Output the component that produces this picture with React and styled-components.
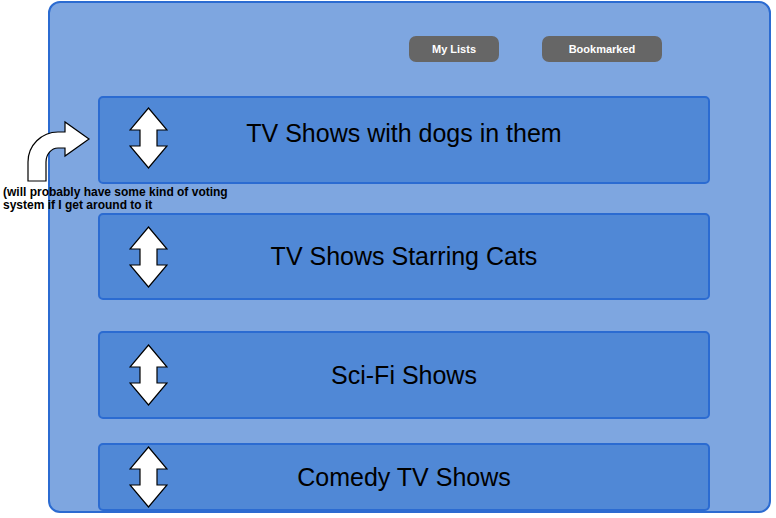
import React from "react";
import styled, { createGlobalStyle } from "styled-components";

const Global = createGlobalStyle`
  html, body { margin: 0; padding: 0; background: #ffffff; overflow: hidden; }
  body { font-family: "Liberation Sans", Arial, sans-serif; }
`;

const Page = styled.div`
  position: relative;
  width: 776px;
  height: 518px;
`;

const Frame = styled.div`
  box-sizing: border-box;
  margin: 1px 0 0 48px;
  width: 723px;
  height: 512px;
  border: 2px solid #2b6bd1;
  border-radius: 12px;
  background: #7ea6e0;
  overflow: hidden;
  display: flex;
  flex-direction: column;
`;

const NavBar = styled.div`
  display: flex;
  gap: 43px;
  margin: 33px 0 0 359px;
`;

const NavButton = styled.div`
  box-sizing: border-box;
  width: ${(p) => p.$w}px;
  height: 26px;
  border-radius: 7px;
  background: #666666;
  color: #ffffff;
  font-weight: bold;
  font-size: 11px;
  display: flex;
  align-items: center;
  justify-content: center;
`;

const Card = styled.div`
  box-sizing: border-box;
  flex: none;
  margin: ${(p) => p.$mt}px 0 0 48px;
  width: 612px;
  height: ${(p) => p.$h}px;
  border: 2px solid #2b6bd1;
  border-radius: 5px;
  background: #5088d6;
  display: grid;
  grid-template-columns: 1fr auto 1fr;
  align-items: center;
`;

const Handle = styled.svg`
  justify-self: start;
  margin-left: 29px;
  margin-bottom: ${(p) => p.$lift || 0}px;
  display: block;
`;

const Title = styled.div`
  font-size: 25px;
  color: #000000;
  white-space: nowrap;
  padding-bottom: ${(p) => p.$lift || 0}px;
`;

const CurvedArrow = styled.svg`
  position: absolute;
  left: 0;
  top: 0;
  display: block;
`;

const Note = styled.div`
  position: absolute;
  left: 3px;
  top: 185px;
  font-size: 12px;
  line-height: 13px;
  font-weight: bold;
  color: #000000;
  white-space: nowrap;
`;

const UpDown = ({ lift }) => (
  <Handle width="39" height="62" viewBox="-1 -1 39 62" $lift={lift}>
    <path
      d="M18.5 0 L37 22 L27 22 L27 38 L37 38 L18.5 60 L0 38 L10 38 L10 22 L0 22 Z"
      fill="#ffffff"
      stroke="#000000"
      strokeWidth="1.2"
      strokeLinejoin="miter"
    />
  </Handle>
);

const lists = [
  { title: "TV Shows with dogs in them", mt: 34, h: 88, lift: 14, arrowLift: 5 },
  { title: "TV Shows Starring Cats", mt: 29, h: 87, lift: 0, arrowLift: 0 },
  { title: "Sci-Fi Shows", mt: 31, h: 88, lift: 0, arrowLift: 0 },
  { title: "Comedy TV Shows", mt: 24, h: 68, lift: 0, arrowLift: 0 },
];

export default function App() {
  return (
    <>
      <Global />
      <Page>
        <Frame>
          <NavBar>
            <NavButton $w={90}>My Lists</NavButton>
            <NavButton $w={120}>Bookmarked</NavButton>
          </NavBar>
          {lists.map((l) => (
            <Card key={l.title} $mt={l.mt} $h={l.h}>
              <UpDown lift={l.arrowLift} />
              <Title $lift={l.lift}>{l.title}</Title>
              <span />
            </Card>
          ))}
        </Frame>
        <CurvedArrow width="100" height="190" viewBox="0 0 100 190">
          <path
            d="M28 180 L28 161 A30 30 0 0 1 58 131 L65 131 L65 121 L89 138 L65 155 L65 147 L58 147 A12 14 0 0 0 46 161 L46 180 Z"
            fill="#ffffff"
            stroke="#000000"
            strokeWidth="1.2"
          />
        </CurvedArrow>
        <Note>
          (will probably have some kind of voting
          <br />
          system if I get around to it
        </Note>
      </Page>
    </>
  );
}
